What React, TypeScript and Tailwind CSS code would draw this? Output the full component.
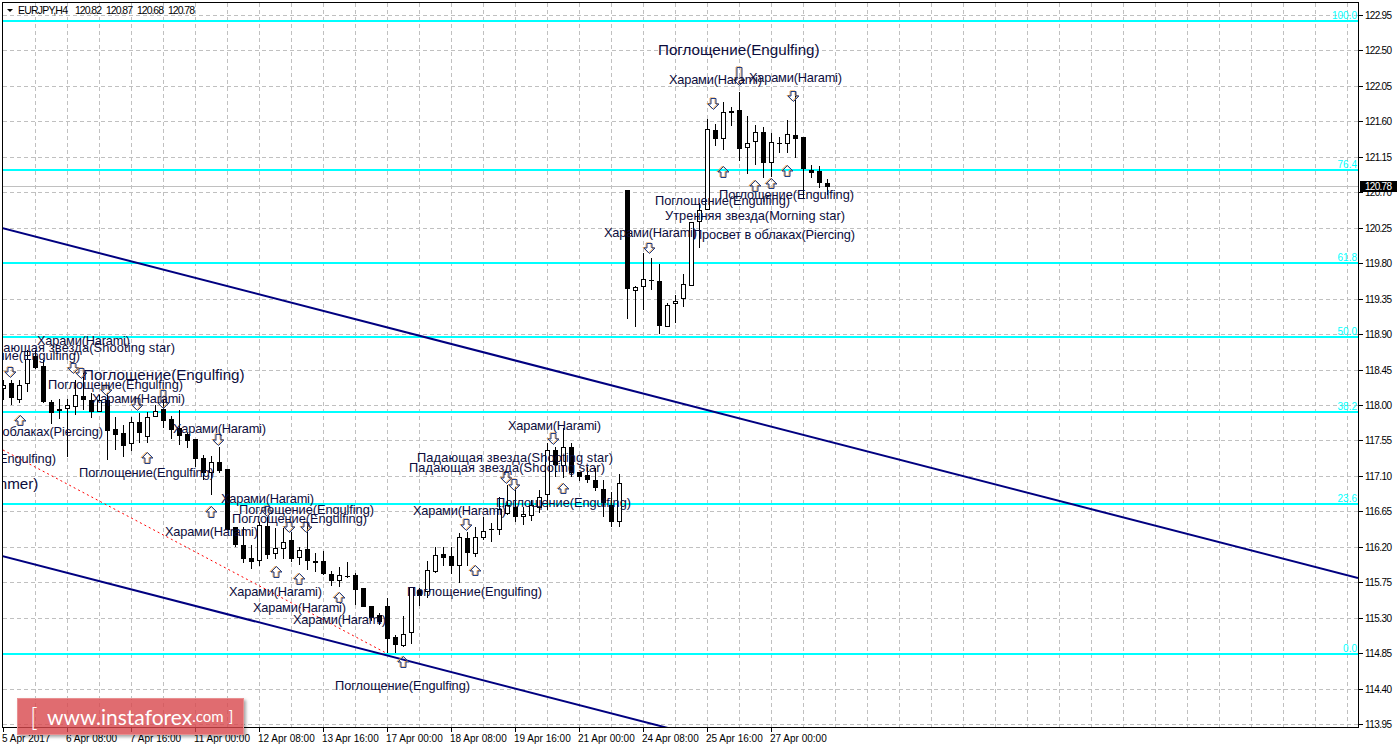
import * as React from "react";

// [wickTop, wickBottom, bodyTop, bodyBottom, bullish] — x is 3 + 8 * index
type Bar = [number, number, number, number, number];

const bars: Bar[] = [
  [380, 400, 385, 389, 1],
  [380, 405, 383, 398, 0],
  [380, 403, 385, 400, 1],
  [350, 392, 359, 384, 1],
  [350, 369, 356, 368, 0],
  [360, 403, 366, 402, 0],
  [400, 424, 402, 413, 0],
  [399, 419, 409, 411, 1],
  [399, 457, 405, 409, 1],
  [380, 415, 395, 407, 1],
  [373, 410, 396, 400, 0],
  [393, 418, 400, 412, 0],
  [395, 412, 400, 412, 1],
  [393, 460, 400, 431, 0],
  [417, 450, 429, 435, 0],
  [425, 457, 433, 446, 0],
  [417, 451, 422, 444, 1],
  [413, 443, 422, 433, 0],
  [412, 443, 417, 437, 1],
  [405, 417, 411, 417, 1],
  [400, 428, 409, 421, 0],
  [416, 439, 419, 430, 0],
  [410, 445, 428, 436, 0],
  [433, 448, 434, 441, 0],
  [439, 467, 439, 459, 0],
  [455, 480, 458, 473, 0],
  [456, 495, 462, 473, 1],
  [447, 473, 462, 471, 0],
  [469, 530, 469, 530, 0],
  [527, 547, 527, 545, 0],
  [527, 563, 545, 559, 0],
  [545, 569, 558, 562, 0],
  [522, 566, 525, 561, 1],
  [517, 559, 526, 555, 0],
  [528, 559, 548, 554, 1],
  [528, 559, 542, 549, 1],
  [532, 562, 540, 559, 0],
  [547, 565, 550, 558, 1],
  [523, 570, 549, 561, 0],
  [553, 572, 561, 563, 0],
  [551, 575, 561, 574, 0],
  [571, 586, 574, 581, 0],
  [567, 587, 575, 581, 1],
  [562, 578, 576, 577, 0],
  [573, 605, 575, 590, 0],
  [588, 607, 588, 607, 0],
  [606, 621, 606, 618, 0],
  [613, 625, 615, 622, 0],
  [598, 653, 606, 639, 0],
  [635, 653, 637, 645, 0],
  [616, 647, 634, 646, 1],
  [587, 644, 587, 633, 1],
  [588, 606, 590, 596, 0],
  [561, 598, 570, 592, 1],
  [547, 573, 555, 572, 1],
  [547, 566, 554, 558, 0],
  [547, 574, 556, 566, 0],
  [533, 583, 537, 566, 1],
  [532, 566, 538, 553, 0],
  [527, 557, 537, 554, 1],
  [517, 540, 531, 538, 1],
  [523, 542, 529, 530, 0],
  [497, 535, 509, 530, 1],
  [485, 515, 505, 514, 1],
  [487, 522, 507, 517, 0],
  [507, 525, 514, 517, 1],
  [500, 521, 505, 516, 1],
  [490, 513, 497, 508, 1],
  [443, 510, 450, 495, 1],
  [447, 477, 450, 465, 0],
  [428, 478, 447, 466, 1],
  [443, 477, 447, 473, 0],
  [472, 481, 472, 477, 0],
  [467, 483, 475, 480, 0],
  [468, 491, 480, 488, 0],
  [480, 517, 489, 503, 0],
  [492, 527, 505, 522, 0],
  [474, 527, 483, 522, 1],
  [190, 319, 190, 289, 0],
  [286, 327, 287, 291, 1],
  [253, 310, 279, 287, 1],
  [258, 290, 280, 281, 0],
  [264, 334, 281, 326, 0],
  [303, 327, 305, 327, 1],
  [295, 323, 301, 304, 1],
  [274, 307, 284, 299, 1],
  [222, 286, 222, 286, 1],
  [203, 248, 210, 222, 1],
  [119, 210, 129, 210, 1],
  [124, 146, 130, 139, 0],
  [102, 150, 112, 139, 1],
  [107, 126, 111, 113, 1],
  [92, 161, 110, 149, 0],
  [116, 174, 143, 148, 1],
  [125, 165, 132, 142, 1],
  [127, 178, 132, 163, 0],
  [133, 177, 142, 163, 1],
  [137, 153, 143, 144, 0],
  [120, 153, 134, 144, 1],
  [92, 158, 135, 139, 0],
  [137, 199, 137, 169, 0],
  [165, 178, 170, 173, 0],
  [166, 188, 171, 183, 0],
  [179, 195, 183, 187, 0],
];

const prices = [
  "122.95", "122.50", "122.05", "121.60", "121.15", "120.70", "120.25",
  "119.80", "119.35", "118.90", "118.45", "118.00", "117.55", "117.10",
  "116.65", "116.20", "115.75", "115.30", "114.85", "114.40", "113.95",
];

const dates = [
  "5 Apr 2017", "6 Apr 08:00", "7 Apr 16:00", "11 Apr 00:00", "12 Apr 08:00",
  "13 Apr 16:00", "17 Apr 00:00", "18 Apr 08:00", "19 Apr 16:00",
  "21 Apr 00:00", "24 Apr 08:00", "25 Apr 16:00", "27 Apr 00:00",
];

const ohlc: [number, string][] = [
  [75, "120.82"],
  [106, "120.87"],
  [137, "120.68"],
  [168, "120.78"],
];

const fibs: [number, string][] = [
  [20, "100.0"],
  [169, "76.4"],
  [262, "61.8"],
  [336, "50.0"],
  [411, "38.2"],
  [503, "23.6"],
  [653, "0.0"],
];

const ENG = "Поглощение(Engulfing)";
const HAR = "Харами(Harami)";
const STAR = "Падающая звезда(Shooting star)";
const PIERCE = "Просвет в облаках(Piercing)";
const MORNING = "Утренняя звезда(Morning star)";

const widths: Record<string, number> = {
  [ENG]: 135,
  [HAR]: 93,
  [STAR]: 196,
  [PIERCE]: 162,
  [MORNING]: 180,
};

// [left x, middle y, text, big]
const labels: [number, number, string, boolean?][] = [
  [658, 50, ENG, true],
  [669, 79, HAR],
  [749, 77, HAR],
  [719, 194, ENG],
  [655, 200, ENG],
  [665, 215, MORNING],
  [693, 234, PIERCE],
  [604, 232, HAR],
  [508, 425, HAR],
  [417, 457, STAR],
  [409, 467, STAR],
  [496, 502, ENG],
  [413, 510, HAR],
  [407, 591, ENG],
  [335, 685, ENG],
  [293, 619, HAR],
  [253, 607, HAR],
  [229, 591, HAR],
  [165, 531, HAR],
  [239, 509, ENG],
  [232, 518, ENG],
  [221, 498, HAR],
  [37, 340, HAR],
  [-21, 347, STAR],
  [-55, 355, ENG],
  [83, 375, ENG, true],
  [48, 384, ENG],
  [92, 398, HAR],
  [-59, 431, PIERCE],
  [173, 428, HAR],
  [79, 472, ENG],
  [-79, 458, ENG],
  [-75, 484, "Молот(Hammer)", true],
];

// [center x, top y, bottom y]
const downArrows: [number, number, number][] = [
  [10, 367, 377],
  [73, 363, 373],
  [81, 368, 378],
  [106, 385, 395],
  [137, 398, 410],
  [163, 390, 408],
  [218, 434, 445],
  [267, 506, 516],
  [289, 522, 532],
  [306, 522, 532],
  [466, 519, 530],
  [506, 472, 483],
  [514, 479, 490],
  [553, 433, 444],
  [649, 243, 253],
  [713, 98, 109],
  [739, 67, 85],
  [793, 91, 101],
];

const upArrows: [number, number, number][] = [
  [20, 415, 425],
  [147, 452, 463],
  [211, 506, 517],
  [276, 566, 577],
  [299, 573, 584],
  [339, 592, 602],
  [403, 656, 667],
  [475, 565, 575],
  [563, 483, 493],
  [755, 180, 191],
  [771, 178, 188],
  [723, 166, 177],
  [787, 165, 176],
];

function downPoints(x: number, t: number, b: number) {
  const n = b - 5.5;
  return `${x - 2.5},${t} ${x + 2.5},${t} ${x + 2.5},${n} ${x + 5.5},${n} ${x},${b} ${x - 5.5},${n} ${x - 2.5},${n}`;
}

function upPoints(x: number, t: number, b: number) {
  const n = t + 5.5;
  return `${x},${t} ${x + 5.5},${n} ${x + 2.5},${n} ${x + 2.5},${b} ${x - 2.5},${b} ${x - 2.5},${n} ${x - 5.5},${n}`;
}

function Arrow({ points }: { points: string }) {
  return (
    <g fill="none" strokeWidth="1">
      <polygon points={points} stroke="#e8963a" transform="translate(-0.4 0)" />
      <polygon points={points} stroke="#1c3f8c" transform="translate(0.5 0.5)" />
    </g>
  );
}

function Candle({ bar, index }: { bar: Bar; index: number }) {
  const [wt, wb, bt, bb, up] = bar;
  const x = 3 + 8 * index;
  return (
    <g shapeRendering="crispEdges">
      <rect x={x} y={wt} width="1" height={wb - wt} fill="#000" />
      {up ? (
        <rect x={x - 1.5} y={bt + 0.5} width="4" height={bb - bt - 1} fill="#fff" stroke="#000" />
      ) : (
        <rect x={x - 2} y={bt} width="5" height={bb - bt} fill="#000" />
      )}
    </g>
  );
}

function Chart() {
  return (
    <svg width="1398" height="749" viewBox="0 0 1398 749" className="block">
      <defs>
        <clipPath id="plot">
          <rect x="3" y="3" width="1355" height="724" />
        </clipPath>
      </defs>

      <g clipPath="url(#plot)">
        <g stroke="#c0c0c0" strokeDasharray="4 3" shapeRendering="crispEdges">
          {prices.map((_, i) => {
            const y = Math.round(15 + i * 35.45) + 0.5;
            return <line key={i} x1="3" x2="1358" y1={y} y2={y} />;
          })}
          {Array.from({ length: 42 }, (_, i) => (
            <line key={i} x1={35.5 + i * 32} x2={35.5 + i * 32} y1="3" y2="727" />
          ))}
        </g>
        <line x1="3" x2="1358" y1="186.5" y2="186.5" stroke="#c0c0c0" shapeRendering="crispEdges" />

        {fibs.map(([y, name]) => (
          <g key={name}>
            <rect x="3" y={y} width="1355" height="2" fill="#00ffff" />
            <text x="1357" y={y - 1} textAnchor="end" fontSize="10" fill="#00ffff">
              {name}
            </text>
          </g>
        ))}

        <line x1="2" y1="228" x2="1358" y2="578" stroke="#000080" strokeWidth="2" />
        <line x1="2" y1="556" x2="668" y2="728" stroke="#000080" strokeWidth="2" />
        <line x1="3" y1="450" x2="386" y2="653" stroke="#ff0000" strokeWidth="1" strokeDasharray="2 3" />

        {bars.map((bar, i) => (
          <Candle key={i} bar={bar} index={i} />
        ))}
        {downArrows.map(([x, t, b], i) => (
          <Arrow key={i} points={downPoints(x, t, b)} />
        ))}
        {upArrows.map(([x, t, b], i) => (
          <Arrow key={i} points={upPoints(x, t, b)} />
        ))}

        {labels.map(([x, y, text, big], i) => (
          <text
            key={i}
            x={x}
            y={y + 5}
            fontSize={big ? 15.2 : 12.8}
            fill="#0c0c3c"
            textLength={big ? undefined : widths[text]}
          >
            {text}
          </text>
        ))}
      </g>

      {/* frame */}
      <g fill="#000" shapeRendering="crispEdges">
        <rect x="2" y="2" width="1" height="725" />
        <rect x="2" y="2" width="1357" height="1" />
        <rect x="1358" y="2" width="1" height="726" />
        <rect x="2" y="727" width="1357" height="1" />
      </g>

      <polygon points="7,9 13,9 10,12" fill="#000" />
      <text x="18" y="14" fontSize="10.5" fill="#000" textLength="50">
        EURJPY,H4
      </text>
      {ohlc.map(([x, v]) => (
        <text key={x} x={x} y="14" fontSize="10.5" fill="#000" textLength="27">
          {v}
        </text>
      ))}

      {prices.map((p, i) => {
        const y = Math.round(15 + i * 35.45);
        return (
          <g key={p}>
            <rect x="1359" y={y} width="4" height="1" fill="#000" />
            <text x="1365" y={y + 4} fontSize="10" fill="#000" textLength="27">
              {p}
            </text>
          </g>
        );
      })}

      {dates.map((d, i) => (
        <g key={d}>
          <rect x={3 + i * 64} y="728" width="1" height="4" fill="#000" />
          <text x={2 + i * 64} y="742" fontSize="10" fill="#000">
            {d}
          </text>
        </g>
      ))}

      <rect x="1360" y="181" width="37" height="11" fill="#000" />
      <text x="1365" y="190" fontSize="10" fill="#fff" textLength="27">
        120.78
      </text>
    </svg>
  );
}

export default function App() {
  return (
    <div className="relative w-[1398px] h-[749px] overflow-hidden bg-white font-['Liberation_Sans',Arial,sans-serif]">
      <Chart />
      <div className="absolute left-[17px] top-[698px] flex h-[37px] w-[227px] items-center border border-[#e88f90] bg-[#d8474c]/80 pl-[12px] text-white shadow-[2px_2px_3px_rgba(0,0,0,0.35)] font-['Lato',sans-serif]">
        <span className="w-[17px] shrink-0 text-[26px] font-light leading-none">[</span>
        <span className="shrink-0 text-[21px] leading-none">www.instaforex</span>
        <span className="shrink-0 text-[15px] leading-none">.com</span>
        <span className="ml-[5px] shrink-0 text-[15px] leading-none">]</span>
      </div>
    </div>
  );
}
